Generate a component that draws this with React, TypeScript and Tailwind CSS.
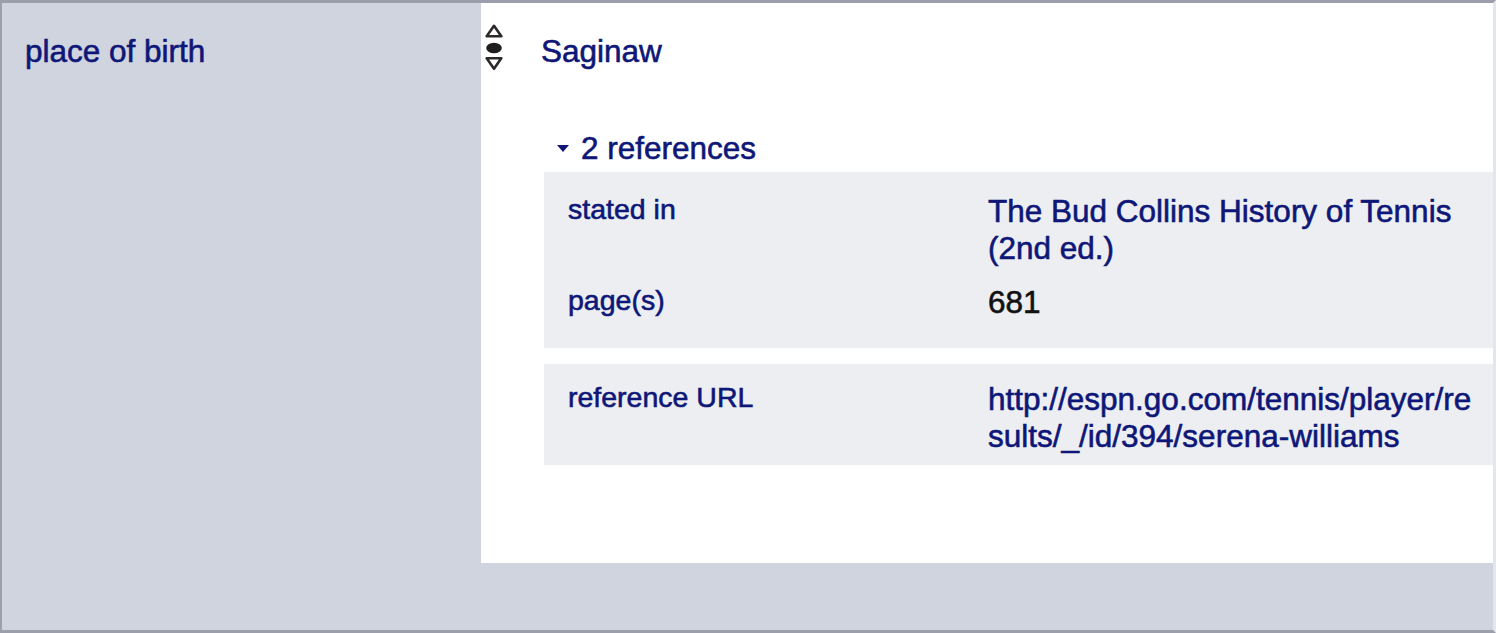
function RankIcon() {
  return (
    <svg width="18" height="46" viewBox="0 0 18 46" fill="none">
      <path d="M9 1.8 L16.3 12.3 L1.7 12.3 Z" stroke="#2a2a2a" strokeWidth="2.6" strokeLinejoin="round" />
      <ellipse cx="9" cy="24" rx="7.8" ry="5.2" fill="#1e1e1e" />
      <path d="M1.7 34.2 L16.3 34.2 L9 44.7 Z" stroke="#2a2a2a" strokeWidth="2.6" strokeLinejoin="round" />
    </svg>
  );
}

function Row({ label, children }: { label: string; children: React.ReactNode }) {
  return (
    <div className="grid grid-cols-[420px_498px]">
      <div className="-mt-[2px] text-[28.5px] leading-[37px]">{label}</div>
      <div className="text-[31.5px] leading-[37px]">{children}</div>
    </div>
  );
}

export default function App() {
  return (
    <div className="w-[1496px] h-[633px] flex bg-[#d0d4de] border-t-[3px] border-l-2 border-b-[3px] border-r-[3px] border-[#9c9eac] border-r-[#e4e6ec] font-['Liberation_Sans',Arial,sans-serif] text-[#0e1778] [-webkit-text-stroke:0.6px]">
      <div className="w-[479px] shrink-0 pl-[23px] pt-[30px]">
        <div className="text-[31.5px] leading-[36px]">place of birth</div>
      </div>

      <div className="flex-1 self-start h-[560px] bg-white flex">
        <div className="pl-[4px] pt-[21px] shrink-0">
          <RankIcon />
        </div>

        <div className="flex-1 ml-[38px] pt-[30px] flex flex-col">
          <div className="text-[31.5px] leading-[36px]">Saginaw</div>

          <div className="mt-[61px] pl-[16px] flex items-center gap-[12px]">
            <span className="block w-0 h-0 border-l-[6.5px] border-r-[6.5px] border-t-[7px] border-l-transparent border-r-transparent border-t-[#0e1778]" />
            <span className="text-[31.5px] leading-[36px]">2 references</span>
          </div>

          <div className="ml-[3px] mt-[6px] bg-[#eceef2] pl-[24px] pt-[21px] pb-[27px] flex flex-col gap-[17px]">
            <Row label="stated in">The Bud Collins History of Tennis (2nd ed.)</Row>
            <Row label="page(s)">
              <span className="text-[#111]">681</span>
            </Row>
          </div>

          <div className="ml-[3px] mt-[16px] bg-[#eceef2] pl-[24px] pt-[17px] pb-[10px]">
            <Row label="reference URL">
              <span className="break-all">http://espn.go.com/tennis/player/results/_/id/394/serena-williams</span>
            </Row>
          </div>
        </div>
      </div>
    </div>
  );
}
